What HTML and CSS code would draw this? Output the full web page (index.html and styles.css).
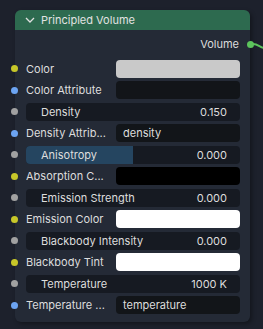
FILE: index.html
```html
<!DOCTYPE html>
<html lang="en">
<head>
    <meta charset="UTF-8">
    <title>Principled Volume</title>
    <link rel="stylesheet" href="styles.css">
</head>
<body>

<div class="node">
    <div class="header">
        <svg class="chevron" width="10" height="6" viewBox="0 0 10 6"><polyline points="1,1 5,5 9,1" fill="none" stroke="#e0e0e0" stroke-width="1.3"/></svg>
        <span>Principled Volume</span>
    </div>

    <div class="output">
        <span>Volume</span>
        <span class="socket out green"></span>
        <svg class="link" width="14" height="8" viewBox="0 0 14 8"><path d="M0,1 C5,1 8,5 14,6" fill="none" stroke="#5cc45c" stroke-width="2"/></svg>
    </div>

    <div class="inputs">
        <div class="row">
            <span class="socket yellow"></span>
            <span class="label">Color</span>
            <span class="field swatch grey"></span>
        </div>
        <div class="row">
            <span class="socket blue"></span>
            <span class="label">Color Attribute</span>
            <span class="field text"></span>
        </div>
        <div class="row">
            <span class="socket grey"></span>
            <span class="field num"><span>Density</span><span>0.150</span></span>
        </div>
        <div class="row">
            <span class="socket blue"></span>
            <span class="label">Density Attrib...</span>
            <span class="field text">density</span>
        </div>
        <div class="row">
            <span class="socket grey"></span>
            <span class="field num slider"><span class="fill" style="width: 50%"></span><span>Anisotropy</span><span>0.000</span></span>
        </div>
        <div class="row">
            <span class="socket yellow"></span>
            <span class="label">Absorption C...</span>
            <span class="field swatch black"></span>
        </div>
        <div class="row">
            <span class="socket grey"></span>
            <span class="field num"><span>Emission Strength</span><span>0.000</span></span>
        </div>
        <div class="row">
            <span class="socket yellow"></span>
            <span class="label">Emission Color</span>
            <span class="field swatch white"></span>
        </div>
        <div class="row">
            <span class="socket grey"></span>
            <span class="field num"><span>Blackbody Intensity</span><span>0.000</span></span>
        </div>
        <div class="row">
            <span class="socket yellow"></span>
            <span class="label">Blackbody Tint</span>
            <span class="field swatch white"></span>
        </div>
        <div class="row">
            <span class="socket grey"></span>
            <span class="field num"><span>Temperature</span><span>1000 K</span></span>
        </div>
        <div class="row">
            <span class="socket blue"></span>
            <span class="label">Temperature ...</span>
            <span class="field text">temperature</span>
        </div>
    </div>
</div>

</body>
</html>
```

FILE: styles.css
```css
body {
    margin: 0;
    padding: 10px 0 0 15px;
    background-color: #1d212c;
    font-family: Inter, "Noto Sans", sans-serif;
    font-size: 11px;
    color: #dddddd;
    height: 329px;
    box-sizing: border-box;
    overflow: hidden;
}
.node {
    width: 235px;
    background-color: #242a36;
    border-radius: 6px;
    padding-bottom: 6px;
    box-shadow: 2px 2px 4px rgba(0, 0, 0, 0.35);
}
.header {
    height: 20px;
    background-color: #2d6a4f;
    border-radius: 6px 6px 0 0;
    display: flex;
    align-items: center;
    gap: 6px;
    padding-left: 10px;
    color: #e2e2e2;
}
.chevron {
    display: block;
}
.output {
    position: relative;
    height: 22px;
    margin-top: 3px;
    display: flex;
    align-items: center;
    justify-content: flex-end;
    padding-right: 11px;
}
.inputs {
    margin-top: 3px;
}
.row {
    position: relative;
    height: 21.5px;
    display: flex;
    align-items: center;
    padding: 0 10px 0 11px;
}
.socket {
    position: absolute;
    left: -4px;
    top: 50%;
    width: 7px;
    height: 7px;
    margin-top: -3.5px;
    border-radius: 50%;
}
.socket.out {
    left: auto;
    right: -4px;
}
.link {
    position: absolute;
    right: -17px;
    top: 50%;
    margin-top: -1px;
}
.yellow { background-color: #c7c729; }
.blue { background-color: #6ca4f2; }
.grey { background-color: #a1a1a1; }
.green { background-color: #5cc45c; }
.label {
    width: 90px;
    white-space: nowrap;
    overflow: hidden;
}
.field {
    position: relative;
    height: 18px;
    border-radius: 4px;
    flex: 1;
    display: flex;
    align-items: center;
    box-sizing: border-box;
}
.field.text {
    background-color: #121519;
    padding-left: 7px;
}
.field.num {
    background-color: #161a22;
    justify-content: space-between;
    padding: 0 13px 0 15px;
    overflow: hidden;
}
.field.num span {
    position: relative;
}
.slider .fill {
    position: absolute !important;
    left: 0;
    top: 0;
    bottom: 0;
    background-color: #254560;
}
.swatch.grey { background-color: #c9c9c9; }
.swatch.black { background-color: #000000; }
.swatch.white { background-color: #ffffff; }
```
